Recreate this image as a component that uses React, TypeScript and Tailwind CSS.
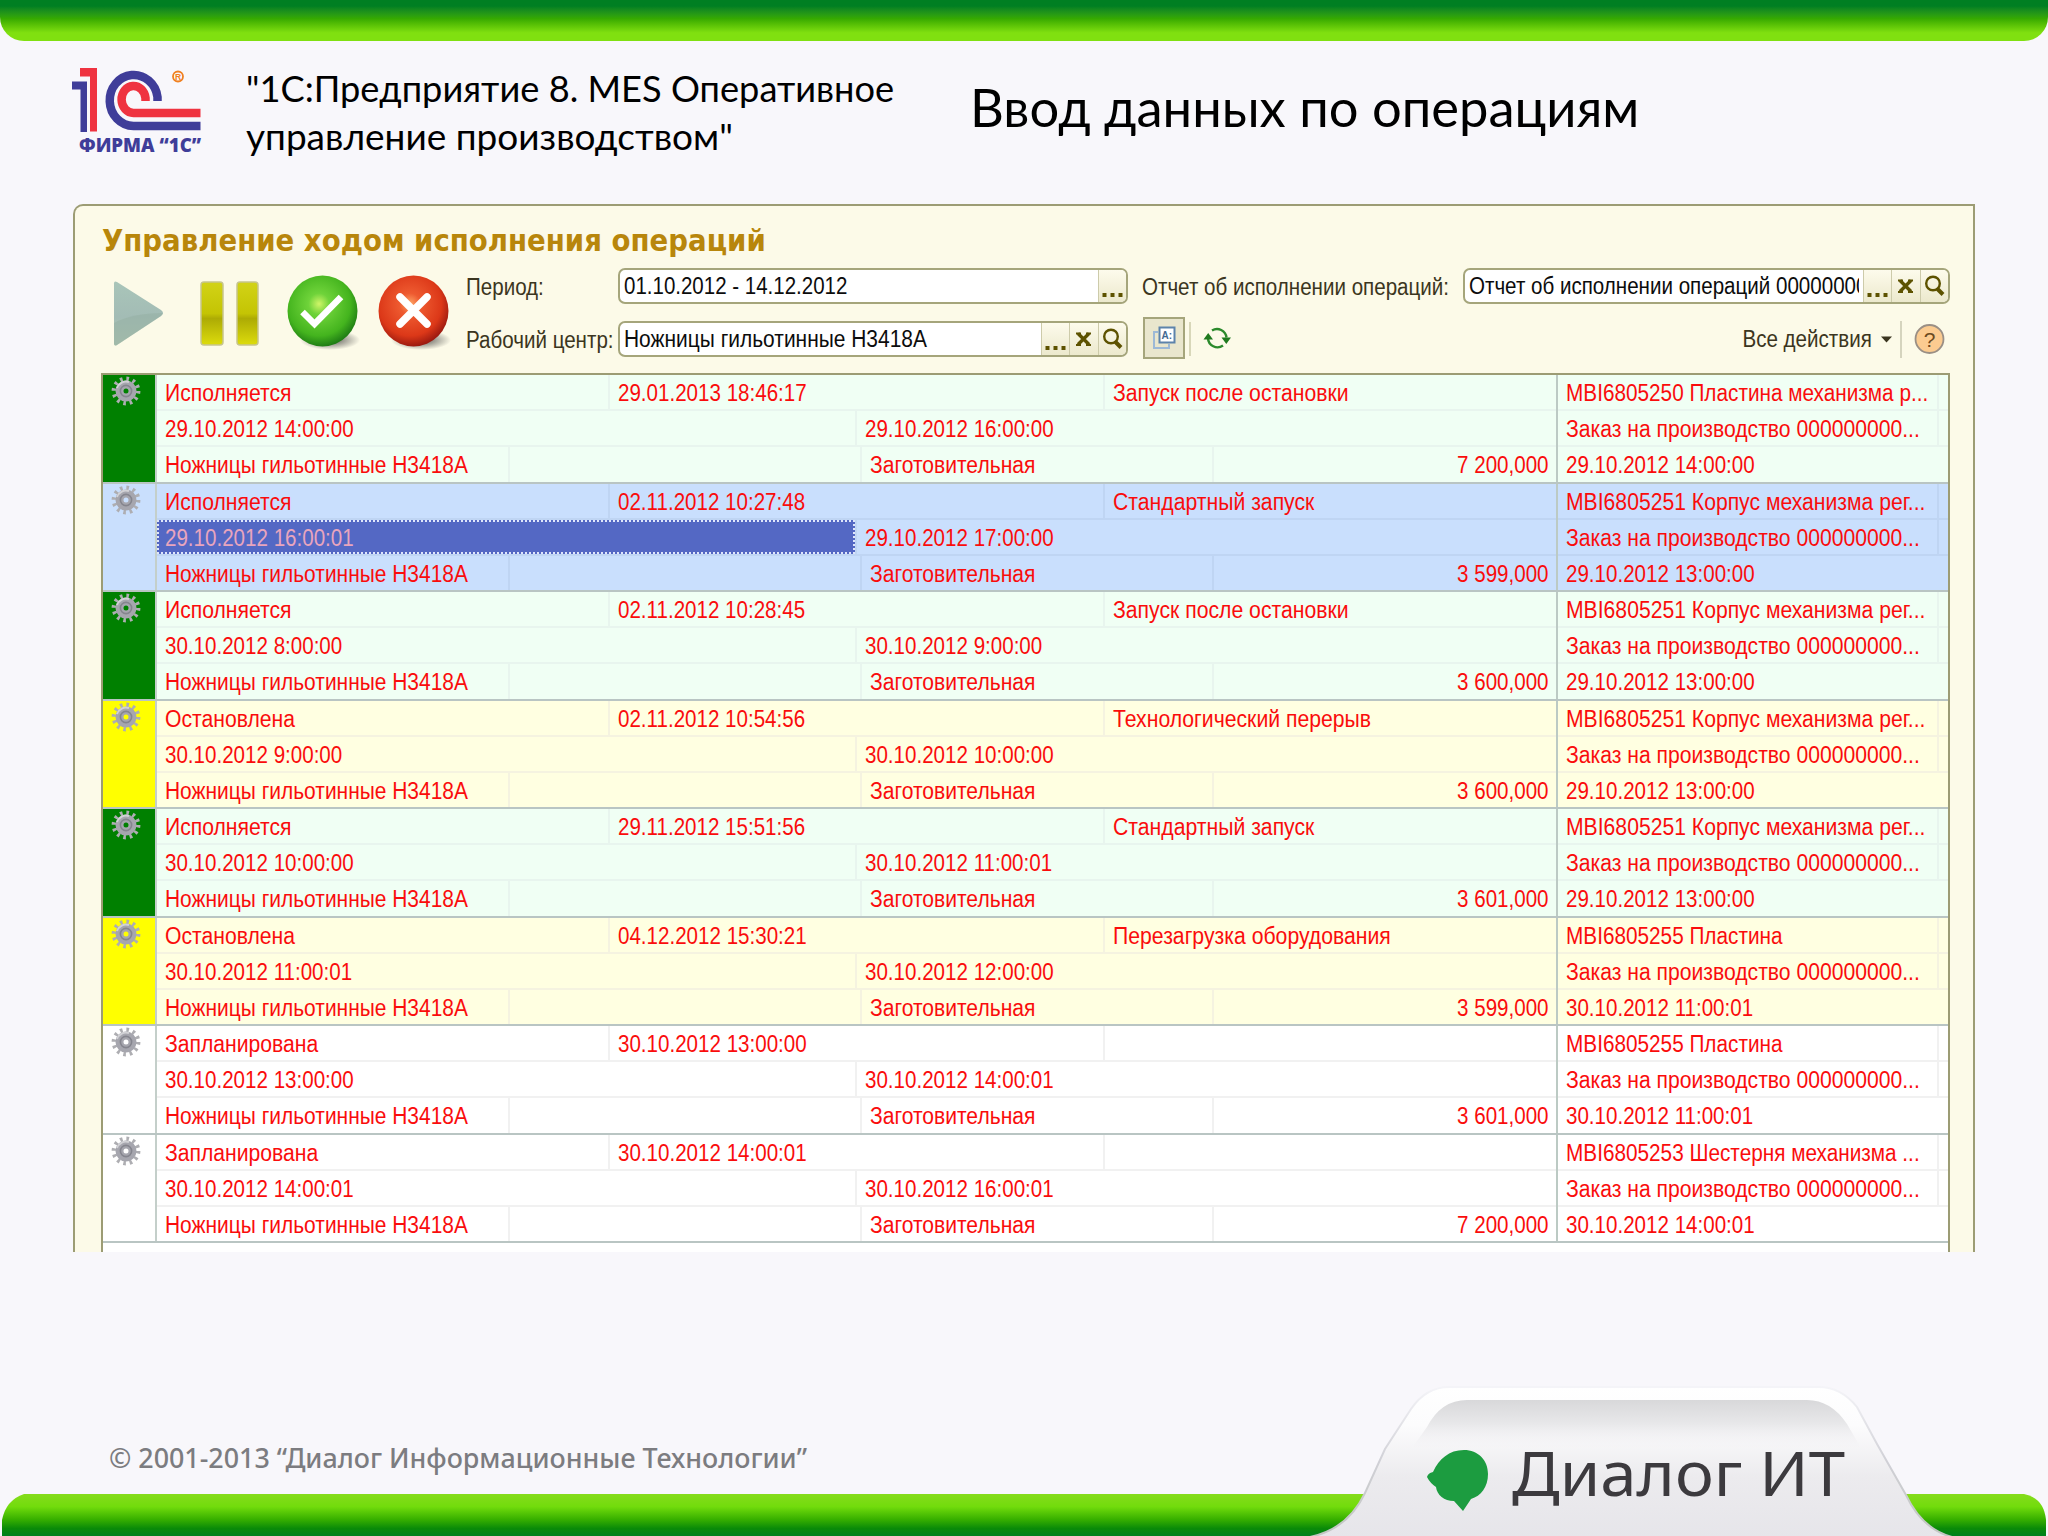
import React from "react";

type Operation = {
  kind: "run" | "selected" | "stop" | "plan";
  status: string;
  changed: string;
  reason: string;
  start: string;
  end: string;
  amount: string;
  item: string;
  date: string;
};

const operations: Operation[] = [
  { kind: "run", status: "Исполняется", changed: "29.01.2013 18:46:17", reason: "Запуск после остановки", start: "29.10.2012 14:00:00", end: "29.10.2012 16:00:00", amount: "7 200,000", item: "MBI6805250 Пластина механизма р...", date: "29.10.2012 14:00:00" },
  { kind: "selected", status: "Исполняется", changed: "02.11.2012 10:27:48", reason: "Стандартный запуск", start: "29.10.2012 16:00:01", end: "29.10.2012 17:00:00", amount: "3 599,000", item: "MBI6805251 Корпус механизма рег...", date: "29.10.2012 13:00:00" },
  { kind: "run", status: "Исполняется", changed: "02.11.2012 10:28:45", reason: "Запуск после остановки", start: "30.10.2012 8:00:00", end: "30.10.2012 9:00:00", amount: "3 600,000", item: "MBI6805251 Корпус механизма рег...", date: "29.10.2012 13:00:00" },
  { kind: "stop", status: "Остановлена", changed: "02.11.2012 10:54:56", reason: "Технологический перерыв", start: "30.10.2012 9:00:00", end: "30.10.2012 10:00:00", amount: "3 600,000", item: "MBI6805251 Корпус механизма рег...", date: "29.10.2012 13:00:00" },
  { kind: "run", status: "Исполняется", changed: "29.11.2012 15:51:56", reason: "Стандартный запуск", start: "30.10.2012 10:00:00", end: "30.10.2012 11:00:01", amount: "3 601,000", item: "MBI6805251 Корпус механизма рег...", date: "29.10.2012 13:00:00" },
  { kind: "stop", status: "Остановлена", changed: "04.12.2012 15:30:21", reason: "Перезагрузка оборудования", start: "30.10.2012 11:00:01", end: "30.10.2012 12:00:00", amount: "3 599,000", item: "MBI6805255 Пластина", date: "30.10.2012 11:00:01" },
  { kind: "plan", status: "Запланирована", changed: "30.10.2012 13:00:00", reason: "", start: "30.10.2012 13:00:00", end: "30.10.2012 14:00:01", amount: "3 601,000", item: "MBI6805255 Пластина", date: "30.10.2012 11:00:01" },
  { kind: "plan", status: "Запланирована", changed: "30.10.2012 14:00:01", reason: "", start: "30.10.2012 14:00:01", end: "30.10.2012 16:00:01", amount: "7 200,000", item: "MBI6805253 Шестерня механизма ...", date: "30.10.2012 14:00:01" },
];

const rowColors = {
  run: { mark: "bg-[#008000]", body: "bg-[#f0fff4]", line: "border-[#e8f5ee]" },
  selected: { mark: "bg-[#c9dffd]", body: "bg-[#c9dffd]", line: "border-[#bfd5f3]" },
  stop: { mark: "bg-[#ffff00]", body: "bg-[#ffffe1]", line: "border-[#f5f3e0]" },
  plan: { mark: "bg-white", body: "bg-white", line: "border-[#f1f1f1]" },
};

function Txt({ children, scale = "scale-x-[.875]", className = "" }: { children: React.ReactNode; scale?: string; className?: string }) {
  return (
    <span className={`inline-block origin-left whitespace-pre text-[23.5px] ${scale} ${className || "leading-[36px]"}`}>
      {children}
    </span>
  );
}

function Gear() {
  return (
    <svg width="30" height="30" viewBox="0 0 30 30">
      <circle cx="15" cy="15" r="12.2" fill="none" stroke="#aeaeb2" strokeWidth="4.4" strokeDasharray="2.6 3.79" />
      <circle cx="15" cy="15" r="6.5" fill="none" stroke="#a6a6ae" strokeWidth="8" />
      <circle cx="15" cy="15" r="5.6" fill="none" stroke="#85858e" strokeWidth="1.6" />
      <path d="M6 12a9.5 9.5 0 0 1 12-6" fill="none" stroke="#d2d2d6" strokeWidth="2" />
    </svg>
  );
}

function OperationRow({ op }: { op: Operation }) {
  const c = rowColors[op.kind];
  const right = [
    { text: op.item, scale: op.item.endsWith("рег...") ? "scale-x-[.9]" : "scale-x-[.883]" },
    { text: "Заказ на производство 000000000...", scale: "scale-x-[.899]" },
    { text: op.date, scale: "scale-x-[.875]" },
  ];
  return (
    <div className="flex h-[108.5px] border-b-2 border-[#b9c5c3] text-[#fa0c0c]">
      <div className={`flex w-[54px] shrink-0 justify-center border-r-2 border-[#c4cfca] pr-[6px] pt-px ${c.mark}`}>
        <Gear />
      </div>
      <div className={`w-[1401px] shrink-0 border-r-2 border-[#bccac4] ${c.body}`}>
        <div className={`flex h-[36px] border-b-2 ${c.line}`}>
          <div className={`w-[453px] shrink-0 border-r-2 pl-[8px] ${c.line}`}><Txt scale="scale-x-[.9]">{op.status}</Txt></div>
          <div className={`w-[495px] shrink-0 border-r-2 pl-[8px] ${c.line}`}><Txt>{op.changed}</Txt></div>
          <div className="pl-[8px]"><Txt scale="scale-x-[.902]">{op.reason}</Txt></div>
        </div>
        <div className={`flex h-[36px] border-b-2 ${c.line}`}>
          {op.kind === "selected" ? (
            <div className="h-[34px] w-[698px] shrink-0 border-2 border-dotted border-[#dfe6fb] bg-[#5468c4] pl-[6px] text-[#e9a5bd]">
              <Txt className="leading-[32px]">{op.start}</Txt>
            </div>
          ) : (
            <div className="w-[698px] shrink-0 pl-[8px]"><Txt>{op.start}</Txt></div>
          )}
          <div className={`border-l-2 pl-[8px] ${c.line}`}><Txt>{op.end}</Txt></div>
        </div>
        <div className="flex h-[34.5px]">
          <div className={`w-[353px] shrink-0 border-r-2 pl-[8px] ${c.line}`}><Txt scale="scale-x-[.891]">Ножницы гильотинные Н3418А</Txt></div>
          <div className={`w-[352px] shrink-0 border-r-2 ${c.line}`} />
          <div className={`w-[352px] shrink-0 border-r-2 pl-[8px] ${c.line}`}><Txt scale="scale-x-[.896]">Заготовительная</Txt></div>
          <div className="flex-1 pr-[7px] text-right"><Txt className="origin-right leading-[36px]">{op.amount}</Txt></div>
        </div>
      </div>
      <div className={`min-w-0 flex-1 ${c.body}`}>
        {right.map(({ text, scale }, i) => (
          <div key={i} className={`flex h-[36px] ${i < 2 ? "border-b-2" : ""} ${c.line}`}>
            <div className={`w-[381px] shrink-0 pl-[8px] ${i < 2 ? "border-r-2" : ""} ${c.line}`}><Txt scale={scale}>{text}</Txt></div>
          </div>
        ))}
      </div>
    </div>
  );
}

function FieldButton({ children }: { children: React.ReactNode }) {
  return <div className="flex w-[28.5px] shrink-0 items-center justify-center border-l border-[#cdcbaa] bg-linear-to-b from-[#fdfbec] to-[#ece9cd]">{children}</div>;
}

function Field({ value, width, scale, full }: { value: string; width: string; scale: string; full?: boolean }) {
  return (
    <div className={`flex h-[36px] overflow-hidden rounded-[7px] border-2 border-[#a5a57b] bg-white text-[#0c0c0c] ${width}`}>
      <div className="mr-[4px] min-w-0 flex-1 overflow-hidden pl-[4px]"><Txt className="leading-[33px]" scale={scale}>{value}</Txt></div>
      <FieldButton>
        <svg width="22" height="30" viewBox="0 0 22 30" fill="#5d5200"><path d="M1.500 22h4v4h-4zM9.500 22h4v4h-4zM17.500 22h4v4h-4z" /></svg>
      </FieldButton>
      {full && (
        <>
          <FieldButton>
            <svg width="20" height="30" viewBox="0 0 20 30" fill="none" stroke="#5d5200" strokeWidth="3.4"><path d="M4 9.500l11 11M15 9.500l-11 11" /><path d="M2 9.500h5M12 9.500h5M2 21h5M12 21h5" strokeWidth="2" /></svg>
          </FieldButton>
          <FieldButton>
            <svg width="24" height="30" viewBox="0 0 24 30" fill="none" stroke="#5d5200"><circle cx="11" cy="12.500" r="6.800" strokeWidth="2.400" /><path d="M15.500 18l5.500 5.500" strokeWidth="4" /></svg>
          </FieldButton>
        </>
      )}
    </div>
  );
}

function Logo1C() {
  return (
    <svg width="134" height="94" viewBox="0 0 134 94">
      <path d="M0 13.500h15v50.500H8.500V21.500H0z" fill="#3f3d99" />
      <path d="M8 0h17v63.500H18V8.500H8z" fill="#ef3340" />
      <path d="M85.500 33V29a24 25.500 0 1 0-24 29h67" fill="none" stroke="#3f3d99" strokeWidth="8.500" />
      <path d="M73.500 33V30a12 13.500 0 1 0-12 15h67" fill="none" stroke="#ef3340" strokeWidth="8.500" />
      <circle cx="106" cy="8.500" r="5" fill="none" stroke="#f08020" strokeWidth="1.800" />
      <text x="106" y="12" fontSize="8.500" textAnchor="middle" fontWeight="700" fill="#f08020" fontFamily="Liberation Sans, sans-serif">R</text>
      <text x="7" y="84" fontSize="19.500" textLength="122" lengthAdjust="spacingAndGlyphs" fontWeight="800" fill="#3f3d99" fontFamily="Open Sans, sans-serif">ФИРМА “1С”</text>
    </svg>
  );
}

function ControlButtons() {
  return (
    <svg width="350" height="80" viewBox="0 0 350 80">
      <defs>
        <linearGradient id="play" x1="0" y1="0" x2="0" y2="1"><stop offset="0" stopColor="#a9c5b9" /><stop offset=".55" stopColor="#a3bcb5" /><stop offset="1" stopColor="#adc5b1" /></linearGradient>
        <linearGradient id="pause" x1="0" y1="0" x2="0" y2="1"><stop offset="0" stopColor="#d2d316" /><stop offset=".5" stopColor="#c4c404" /><stop offset=".58" stopColor="#adab04" /><stop offset="1" stopColor="#dddc0c" /></linearGradient>
        <radialGradient id="ok" cx=".45" cy=".4" r=".6"><stop offset="0" stopColor="#d0f568" /><stop offset=".25" stopColor="#6fd33a" /><stop offset=".75" stopColor="#44b41e" /><stop offset="1" stopColor="#1f7d14" /></radialGradient>
        <radialGradient id="stop" cx=".45" cy=".4" r=".6"><stop offset="0" stopColor="#ffa868" /><stop offset=".25" stopColor="#ee5a30" /><stop offset=".75" stopColor="#dc3818" /><stop offset="1" stopColor="#9c1a10" /></radialGradient>
        <radialGradient id="shade"><stop offset="0" stopColor="#333" stopOpacity=".85" /><stop offset="1" stopColor="#333" stopOpacity="0" /></radialGradient>
      </defs>
      <path d="M12 10.500q0-3 3-1.500l44 28q4 3 0 6l-44 29q-3 1.500-3-1.500z" fill="url(#play)" />
      <path d="M12 50q18-10 49-10l-2 3-44 29q-3 1.500-3-1.500z" fill="#93ad9f" opacity=".45" />
      <rect x="99" y="9" width="22" height="63" rx="3" fill="url(#pause)" stroke="#c6c58c" strokeWidth="1.500" />
      <rect x="135" y="9" width="21" height="63" rx="3" fill="url(#pause)" stroke="#c6c58c" strokeWidth="1.500" />
      <ellipse cx="228" cy="67" rx="30" ry="10" fill="url(#shade)" />
      <ellipse cx="319" cy="67" rx="30" ry="10" fill="url(#shade)" />
      <ellipse cx="220.500" cy="38" rx="35" ry="35.500" fill="url(#ok)" />
      <ellipse cx="311.500" cy="38" rx="35" ry="35.500" fill="url(#stop)" />
      <path d="M200.500 39l12 12L239 24" fill="none" stroke="#fff" strokeWidth="6.500" />
      <path d="M298 24l27 27M325 24l-27 27" fill="none" stroke="#fff" strokeWidth="7.500" strokeLinecap="round" />
    </svg>
  );
}

function Toolbar() {
  return (
    <div className="flex h-[107px] text-[#3b3520]">
      <div className="w-[365px] shrink-0 pl-px pt-[7px]"><ControlButtons /></div>
      <div className="flex-1 pt-[2px]">
        <div className="flex h-[53px] items-start">
          <div className="w-[152px] shrink-0 pt-px"><Txt>Период:</Txt></div>
          <Field value="01.10.2012 - 14.12.2012" width="w-[510px]" scale="scale-x-[.872]" />
          <div className="ml-[14px] w-[321px] shrink-0 pt-px"><Txt>Отчет об исполнении операций:</Txt></div>
          <Field value="Отчет об исполнении операций 00000000" width="w-[487px]" scale="scale-x-[.875]" full />
        </div>
        <div className="flex items-start">
          <div className="w-[152px] shrink-0 pt-px"><Txt>Рабочий центр:</Txt></div>
          <Field value="Ножницы гильотинные Н3418А" width="w-[510px]" scale="scale-x-[.891]" full />
          <svg className="-mt-[4px] ml-[15px]" width="100" height="46" viewBox="0 0 100 46">
            <rect x="1" y="1" width="40" height="40" fill="#e9e6cd" stroke="#a5a57b" strokeWidth="2" />
            <path d="M15 15h-4v16h15v-4" fill="none" stroke="#9db9d6" strokeWidth="2" />
            <rect x="16.500" y="10.500" width="15" height="15" fill="#fff" stroke="#5d83ab" strokeWidth="2" />
            <text x="18.500" y="22" fontSize="10" fontWeight="700" fill="#456a90" fontFamily="Liberation Sans, sans-serif">A:</text>
            <path d="M47 5v34" stroke="#cdcbaa" strokeWidth="1.500" />
            <path d="M69 13.500a9.500 9.500 0 0 1 14.500 7M80 28.500a9.500 9.500 0 0 1-15-7.500" fill="none" stroke="#2c8a2c" strokeWidth="2.400" />
            <path d="M78.500 20.500h9.500l-4.700 6.500zM60.500 22.500h9.500l-4.800-6.500z" fill="#1f7a1f" />
          </svg>
          <div className="flex-1" />
          <Txt className="origin-right leading-[36px]">Все действия</Txt>
          <svg className="ml-[9px]" width="69" height="38" viewBox="0 0 69 38">
            <path d="M0 15.500h11l-5.500 6z" fill="#3b3520" />
            <path d="M20 0v37" stroke="#c9c7b0" strokeWidth="1.500" />
            <circle cx="48.500" cy="18" r="14" fill="#fbcb90" stroke="#9a8f85" strokeWidth="1.800" />
            <text x="48.500" y="25.500" fontSize="21" textAnchor="middle" fill="#6b4a20" fontFamily="Liberation Sans, sans-serif">?</text>
          </svg>
        </div>
      </div>
    </div>
  );
}

function FooterShape() {
  return (
    <svg width="2048" height="186" viewBox="0 0 2048 186">
      <defs>
        <linearGradient id="bar" x1="0" y1="0" x2="0" y2="1"><stop offset="0" stopColor="#86dc1c" /><stop offset=".3" stopColor="#72dc0c" /><stop offset=".6" stopColor="#38b000" /><stop offset=".82" stopColor="#0a8a08" /><stop offset="1" stopColor="#00801e" /></linearGradient>
        <linearGradient id="tab" x1="0" y1="0" x2="0" y2="1"><stop offset="0" stopColor="#fff" /><stop offset=".25" stopColor="#fcfcfd" /><stop offset=".6" stopColor="#ecebee" /><stop offset="1" stopColor="#e6e5ea" /></linearGradient>
        <linearGradient id="inner" x1="0" y1="0" x2="0" y2="1"><stop offset="0" stopColor="#d8d8da" /><stop offset=".5" stopColor="#e8e8ea" /><stop offset="1" stopColor="#f0eff2" stopOpacity="0" /></linearGradient>
        <linearGradient id="edge" x1="0" y1="0" x2="0" y2="1"><stop offset="0" stopColor="#f4f4f8" /><stop offset=".5" stopColor="#d0d0d6" /><stop offset="1" stopColor="#c2c6c2" /></linearGradient>
      </defs>
      <path d="M2 186v-16q4-20 22-26H2024q20 4 22 26v16z" fill="url(#bar)" />
      <path d="M1310 187q38-8 55-44l20-44 26-40q15-22 38-22h370q22 0 38 20l20 37 29 51q16 34 46 42z" fill="url(#tab)" stroke="url(#edge)" strokeWidth="2" />
      <path d="M1412 98l15-21q14-27 40-27h340q24 0 40 24l14 24z" fill="url(#inner)" />
      <path d="M1427 127q1-4 6-5c6-13 16-22 31-22 14 0 24 10 24 24 0 13-7 22-17 25l-8 12-9-10c-10 0-17-6-18-14q-6-4-9-10z" fill="#1c9c40" />
    </svg>
  );
}

export default function App() {
  return (
    <div className="flex h-[1536px] w-[2048px] flex-col overflow-hidden bg-[#f8f7fb] font-['Liberation_Sans',sans-serif]">
      <div className="h-[41px] shrink-0 rounded-b-[24px] bg-linear-to-b from-[#007f22] from-15% via-[#35a900] via-45% to-[#80e010] to-80%" />
      <header className="flex h-[163px] shrink-0 pl-[72px] text-black">
        <div className="w-[174px] shrink-0 pt-[27px]"><Logo1C /></div>
        <div className="w-[724px] shrink-0 pt-[23px] font-['Lato',sans-serif] text-[37px] leading-[48px]">
          <p className="origin-left scale-x-[.979] whitespace-pre">"1С:Предприятие 8. MES Оперативное</p>
          <p className="whitespace-pre">управление производством"</p>
        </div>
        <h1 className="whitespace-pre pt-[31px] font-['Lato',sans-serif] text-[52.5px] leading-[70px]">Ввод данных по операциям</h1>
      </header>
      <main className="ml-[73px] h-[1048px] w-[1902px] shrink-0 overflow-hidden rounded-tl-[10px] border-2 border-b-0 border-[#9c9c74] bg-[#fcfae8] pl-[26px] pr-[23px]">
        <h2 className="h-[60px] pt-[12px] pl-px text-[#b8860b]">
          <span className="inline-block origin-left scale-x-[.92] whitespace-pre font-['DejaVu_Sans',sans-serif] text-[30px] font-bold leading-[46px]">Управление ходом исполнения операций</span>
        </h2>
        <Toolbar />
        <div className="h-[900px] border-2 border-[#9c9c74] bg-white">
          {operations.map((op, i) => <OperationRow key={i} op={op} />)}
        </div>
      </main>
      <footer className="relative mt-[98px] h-[186px] shrink-0">
        <FooterShape />
        <div className="absolute inset-0 text-[#7c7c80]">
          <span className="absolute left-[109px] top-[90px] origin-left scale-x-[.994] whitespace-pre font-['Noto_Sans',sans-serif] text-[27px] font-medium leading-[36px]">© 2001-2013 “Диалог Информационные Технологии”</span>
          <span className="absolute left-[1512px] top-[82px] origin-left scale-x-[1.054] whitespace-pre font-['Noto_Sans',sans-serif] text-[62px] leading-[80px] text-[#3c3a3e]">Диалог ИТ</span>
        </div>
      </footer>
    </div>
  );
}
